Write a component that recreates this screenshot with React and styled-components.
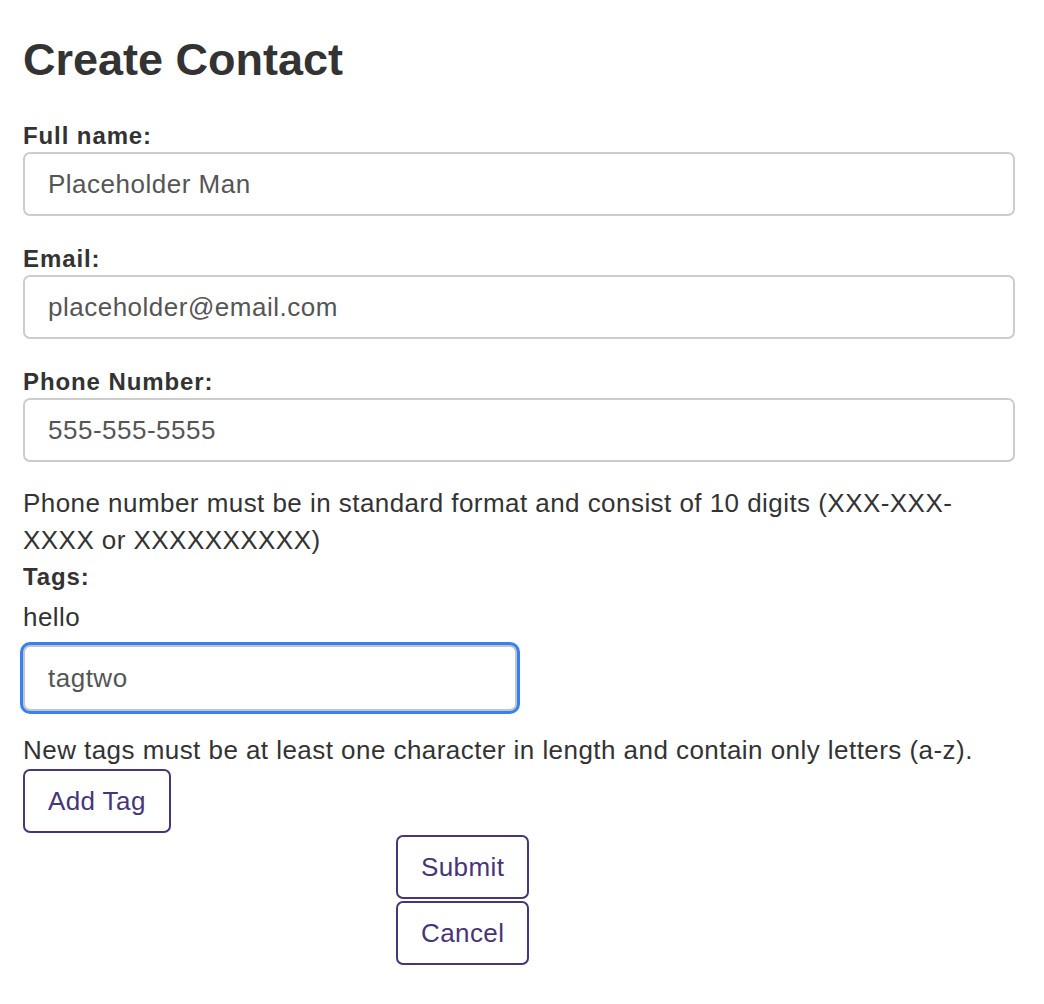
import React, { useState } from "react";
import styled, { createGlobalStyle } from "styled-components";

const GlobalStyle = createGlobalStyle`
  body {
    margin: 0;
    background: #ffffff;
    font-family: "Liberation Sans", Arial, sans-serif;
    color: #333333;
  }
`;

const Page = styled.div`
  width: 992px;
  padding: 0 29px 0 23px;
`;

const Heading = styled.h1`
  margin: 0;
  padding-top: 30px;
  font-size: 45px;
  line-height: 60px;
  font-weight: bold;
  color: #333333;
  margin-bottom: 30px;
`;

const FormGroup = styled.div`
  margin-bottom: 27px;
`;

const Label = styled.label`
  display: block;
  font-size: 24px;
  line-height: 32px;
  letter-spacing: 0.9px;
  font-weight: bold;
  color: #333333;
  margin-top: ${(p) => p.$top || 0}px;
`;

const Input = styled.input`
  display: block;
  box-sizing: border-box;
  width: ${(p) => p.$width || "100%"};
  height: ${(p) => p.$height || 64}px;
  padding: 0 23px;
  font-family: "Liberation Sans", Arial, sans-serif;
  font-size: 26px;
  letter-spacing: 0.5px;
  color: #555555;
  background: #ffffff;
  border: 2px solid #cccccc;
  border-radius: 7px;
  outline: none;
  caret-color: #000000;

  &:focus {
    border: 2px solid #c4c4c4;
    box-shadow: 0 0 0 3px #3580f3;
  }
`;

const Help = styled.div`
  font-size: 26px;
  line-height: 37px;
  letter-spacing: 0.45px;
  color: #333333;
  margin-top: ${(p) => p.$top || 0}px;
`;

const TagItem = styled.div`
  font-size: 26px;
  line-height: 37px;
  letter-spacing: 0.45px;
  margin-top: 6px;
  margin-bottom: 9px;
`;

const Button = styled.button`
  display: ${(p) => (p.$block ? "block" : "inline-block")};
  box-sizing: border-box;
  height: 64px;
  padding: 0 23px;
  margin: ${(p) => p.$margin || 0};
  font-family: "Liberation Sans", Arial, sans-serif;
  font-size: 26px;
  letter-spacing: 0.4px;
  color: #463678;
  background: #ffffff;
  border: 2px solid #463678;
  border-radius: 7px;
  cursor: pointer;
`;

const Actions = styled.div`
  padding-left: 373px;
  padding-bottom: 40px;
`;

export default function App() {
  const [tag, setTag] = useState("tagtwo");

  return (
    <Page>
      <GlobalStyle />
      <Heading>Create Contact</Heading>
      <FormGroup>
        <Label>Full name:</Label>
        <Input defaultValue="Placeholder Man" />
      </FormGroup>
      <FormGroup>
        <Label>Email:</Label>
        <Input defaultValue="placeholder@email.com" />
      </FormGroup>
      <div>
        <Label>Phone Number:</Label>
        <Input defaultValue="555-555-5555" />
      </div>
      <Help $top={23}>
        Phone number must be in standard format and consist of 10 digits
        (XXX-XXX-XXXX or XXXXXXXXXX)
      </Help>
      <Label $top={2}>Tags:</Label>
      <TagItem>hello</TagItem>
      <Input
        $width="494px"
        $height={66}
        value={tag}
        onChange={(e) => setTag(e.target.value)}
        autoFocus
      />
      <Help $top={21}>
        New tags must be at least one character in length and contain only
        letters (a-z).
      </Help>
      <Button>Add Tag</Button>
      <Actions>
        <Button $block $margin="2px 0 0 0">
          Submit
        </Button>
        <Button $block $margin="2px 0 0 0">
          Cancel
        </Button>
      </Actions>
    </Page>
  );
}
